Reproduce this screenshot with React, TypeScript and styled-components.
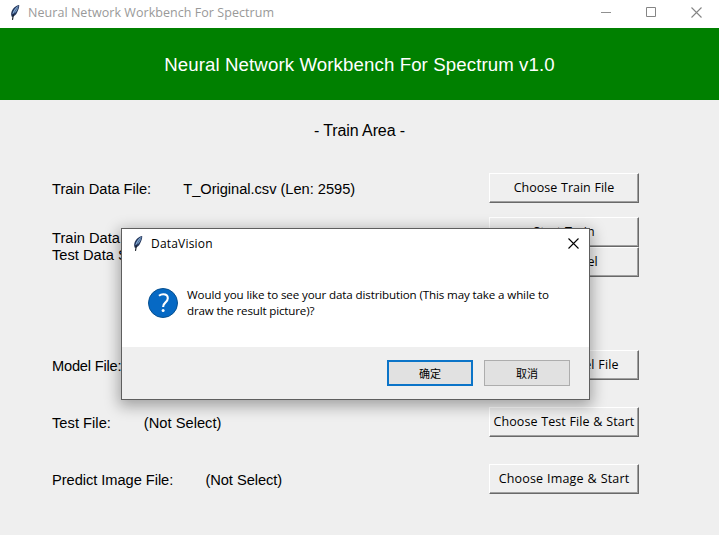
import React from "react";
import styled, { createGlobalStyle } from "styled-components";

const GlobalStyle = createGlobalStyle`
  body { margin: 0; overflow: hidden; }
  *, *::before, *::after { box-sizing: border-box; }
`;

const uiFont = '"Open Sans", "Noto Sans", "Noto Sans CJK SC", sans-serif';
const formFont = '"Liberation Sans", Arial, sans-serif';

const Window = styled.main`
  position: relative;
  width: 719px;
  height: 535px;
  background: #efefef;
  color: #000;
  font-family: ${formFont};
`;

const TitleBar = styled.header`
  display: flex;
  align-items: center;
  height: 28px;
  padding: 0 17px 3px 9px;
  background: #fff;
  color: #999;
  font: 12.5px/16px ${uiFont};
`;

const TitleText = styled.span<{ $spacing: number }>`
  margin-left: 7px;
  padding-top: 1px;
  white-space: nowrap;
  letter-spacing: ${({ $spacing }) => $spacing}px;
`;

const WindowControls = styled.div`
  display: flex;
  gap: 34px;
  margin-left: auto;
`;

const Banner = styled.h1`
  display: flex;
  align-items: center;
  justify-content: center;
  height: 72px;
  margin: 0;
  padding-top: 2px;
  background: #008000;
  color: #fff;
  font: 400 18.67px/22px ${formFont};
  letter-spacing: 0.1px;
  white-space: nowrap;
`;

const SectionTitle = styled.h2`
  height: 73px;
  margin: 0;
  padding-top: 21px;
  font: 400 16px/20px ${formFont};
  letter-spacing: -0.1px;
  text-align: center;
`;

const Form = styled.section`
  display: flex;
  flex-direction: column;
`;

const FormRow = styled.div<{ $after: number }>`
  display: flex;
  justify-content: space-between;
  align-items: center;
  margin-bottom: ${({ $after }) => $after}px;
  padding: 0 80px 0 52px;
`;

const FieldText = styled.div<{ $spacing?: number; $top?: number }>`
  padding-top: ${({ $top = 3 }) => $top}px;
  font-size: 14.67px;
  line-height: 17px;
  letter-spacing: ${({ $spacing = 0 }) => $spacing}px;
  white-space: pre;
`;

const ButtonStack = styled.div`
  display: flex;
  flex-direction: column;
`;

const RaisedButton = styled.button<{ $spacing?: number }>`
  width: 150px;
  height: 30px;
  padding: 0 0 1px;
  border: 1px solid;
  border-color: #fff #696969 #696969 #fff;
  box-shadow: inset -1px -1px 0 #a0a0a0;
  background: #efefef;
  color: #000;
  font: 12.5px/16px ${uiFont};
  letter-spacing: ${({ $spacing = 0 }) => $spacing}px;
  word-spacing: 0.5px;
  white-space: nowrap;
`;

const Dialog = styled.section`
  position: absolute;
  left: 121px;
  top: 228px;
  display: flex;
  flex-direction: column;
  width: 469px;
  height: 172px;
  border: 1px solid #5e5e5e;
  background: #fff;
  box-shadow: 0 4px 14px 2px rgba(0, 0, 0, 0.33);
  font: 12px/16px ${uiFont};
`;

const DialogTitle = styled.header`
  display: flex;
  align-items: center;
  height: 29px;
  padding: 0 10px 0 10px;
`;

const DialogClose = styled.div`
  display: flex;
  margin-left: auto;
`;

const DialogBody = styled.div`
  display: flex;
  flex: 1;
  align-items: flex-start;
  padding: 30px 0 0 26px;
`;

const Message = styled.p`
  margin: -1px 0 0 9px;
  font-size: 11.6px;
  white-space: nowrap;
`;

const MessageLine = styled.span<{ $spacing: number }>`
  display: block;
  letter-spacing: ${({ $spacing }) => $spacing}px;
`;

const DialogFooter = styled.footer`
  display: flex;
  justify-content: flex-end;
  gap: 11px;
  height: 52px;
  padding: 13px 19px 0 0;
  background: #efefef;
`;

const DialogButton = styled.button<{ $primary?: boolean }>`
  width: 86px;
  height: 26px;
  padding: 0 0 1px;
  border: ${({ $primary }) => ($primary ? "2px solid #0b74c8" : "1px solid #adadad")};
  background: #e1e1e1;
  color: #000;
  font: 11px/16px "Noto Sans CJK SC", sans-serif;
`;

const Feather = () => (
  <svg width="12" height="17" viewBox="0 0 12 17">
    <path d="M10.2 1C7 1.200 3.600 4.500 2.400 8.200c-.5 1.800-.3 3.400.6 4.800 2.400-.8 4.200-2.300 5.200-4.700C9.300 6 10.400 3.600 10.200 1z" fill="#23355a" />
    <path d="M9.400 1.800C6.400 3.400 4.200 6.500 3.300 10.200l3.200-1.600C8 6.600 9.400 4.300 9.400 1.800z" fill="#86add8" />
    <path d="M9.200 3C6.800 5.600 5 8.600 3.900 12.500" stroke="#263d61" strokeWidth=".6" fill="none" />
    <path d="M4.400 10.500 3.500 15.800" stroke="#111820" strokeWidth="1.100" fill="none" />
  </svg>
);

const Cross = ({ size, color }: { size: number; color: string }) => (
  <svg width={size} height={size} viewBox="0 0 11 11">
    <path d="m.5.500 10 10m0-10-10 10" stroke={color} strokeWidth="1.100" fill="none" />
  </svg>
);

const QuestionIcon = () => (
  <svg width="30" height="30" viewBox="0 0 30 30">
    <circle cx="15" cy="15" r="14.500" fill="#0669c4" stroke="#07508f" />
    <path d="M11 7.800c1.200-1 2.600-1.500 4.200-1.500 2.800 0 4.600 1.500 4.600 3.900 0 1.800-.8 3-2.500 4.400-1.700 1.400-2.200 2.300-2.200 4.400" fill="none" stroke="#fff" strokeWidth="2.100" />
    <circle cx="15.100" cy="22.500" r="1.500" fill="#fff" />
  </svg>
);

export default function App() {
  return (
    <Window>
      <GlobalStyle />
      <TitleBar>
        <Feather />
        <TitleText $spacing={0.05}>Neural Network Workbench For Spectrum</TitleText>
        <WindowControls>
          <svg width="11" height="11"><path d="M0 5.500h10" stroke="#909090" /></svg>
          <svg width="11" height="11"><path d="M.5.500h9v9H.5z" stroke="#858585" fill="none" /></svg>
          <Cross size={11} color="#858585" />
        </WindowControls>
      </TitleBar>
      <Banner>Neural Network Workbench For Spectrum v1.0</Banner>
      <SectionTitle>- Train Area -</SectionTitle>
      <Form>
        <FormRow $after={14}>
          <FieldText $spacing={-0.03}>{"Train Data File:        T_Original.csv (Len: 2595)"}</FieldText>
          <RaisedButton>Choose Train File</RaisedButton>
        </FormRow>
        <FormRow $after={73}>
          <FieldText $top={0}>{"Train Data Size:\nTest Data Size:"}</FieldText>
          <ButtonStack>
            <RaisedButton>Start Train</RaisedButton>
            <RaisedButton>Save Model</RaisedButton>
          </ButtonStack>
        </FormRow>
        <FormRow $after={27}>
          <FieldText $spacing={-0.22}>Model File:</FieldText>
          <RaisedButton $spacing={0.1}>Choose Model File</RaisedButton>
        </FormRow>
        <FormRow $after={27}>
          <FieldText $spacing={0.03}>{"Test File:        (Not Select)"}</FieldText>
          <RaisedButton $spacing={0.05}>Choose Test File &amp; Start</RaisedButton>
        </FormRow>
        <FormRow $after={0}>
          <FieldText $spacing={-0.05}>{"Predict Image File:        (Not Select)"}</FieldText>
          <RaisedButton $spacing={0.15}>Choose Image &amp; Start</RaisedButton>
        </FormRow>
      </Form>
      <Dialog role="dialog" aria-label="DataVision">
        <DialogTitle>
          <Feather />
          <TitleText $spacing={0.2}>DataVision</TitleText>
          <DialogClose><Cross size={11} color="#000" /></DialogClose>
        </DialogTitle>
        <DialogBody>
          <QuestionIcon />
          <Message>
            <MessageLine $spacing={-0.13}>Would you like to see your data distribution (This may take a while to</MessageLine>
            <MessageLine $spacing={-0.17}>draw the result picture)?</MessageLine>
          </Message>
        </DialogBody>
        <DialogFooter>
          <DialogButton $primary>确定</DialogButton>
          <DialogButton>取消</DialogButton>
        </DialogFooter>
      </Dialog>
    </Window>
  );
}
